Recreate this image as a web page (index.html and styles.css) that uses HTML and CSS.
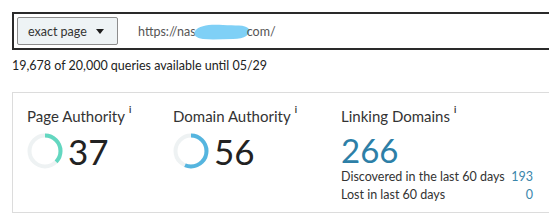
FILE: index.html
```html
<!DOCTYPE html>
<html>
<head>
<meta charset="utf-8">
<link rel="stylesheet" href="styles.css">
</head>
<body>
<div class="page">
  <div class="searchbar">
    <div class="dropdown"><span>exact page</span><span class="caret"></span></div>
    <div class="url"><span>https://nas</span><svg class="scribble" width="58" height="18" viewBox="0 0 58 18"><path d="M2 8 C6 2, 18 1, 30 2 C42 3, 52 1, 56 6 C58 11, 52 16, 40 16 C30 16, 20 17, 10 16 C3 15, 0 12, 2 8 Z" fill="#7fd0f6"/></svg><span>com/</span></div>
  </div>
  <div class="quota">19,678 of 20,000 queries available until 05/29</div>
  <div class="card">
    <div class="metric pa">
      <div class="label">Page Authority<sup class="info">i</sup></div>
      <div class="score">
        <svg class="donut" width="36" height="36" viewBox="0 0 36 36">
          <circle cx="18" cy="18" r="15.5" fill="none" stroke="#eef2f3" stroke-width="4"/>
          <circle cx="18" cy="18" r="15.5" fill="none" stroke="#63d7c0" stroke-width="4" stroke-dasharray="36.03 97.39" transform="rotate(-90 18 18)"/>
        </svg>
        <span class="value">37</span>
      </div>
    </div>
    <div class="metric da">
      <div class="label">Domain Authority<sup class="info">i</sup></div>
      <div class="score">
        <svg class="donut" width="36" height="36" viewBox="0 0 36 36">
          <circle cx="18" cy="18" r="15.5" fill="none" stroke="#eef2f3" stroke-width="4"/>
          <circle cx="18" cy="18" r="15.5" fill="none" stroke="#55b5df" stroke-width="4" stroke-dasharray="54.54 97.39" transform="rotate(-90 18 18)"/>
        </svg>
        <span class="value">56</span>
      </div>
    </div>
    <div class="metric ld">
      <div class="label">Linking Domains<sup class="info">i</sup></div>
      <div class="big">266</div>
      <div class="row"><span>Discovered in the last 60 days</span><span class="num">193</span></div>
      <div class="row"><span>Lost in last 60 days</span><span class="num">0</span></div>
    </div>
  </div>
</div>
</body>
</html>
```
FILE: styles.css
```css
html, body {
  margin: 0;
  padding: 0;
  background: #fff;
  overflow: hidden;
}
body {
  font-family: Lato, "Liberation Sans", sans-serif;
  color: #222;
}
.page {
  padding: 12px 0 0 12px;
  width: 580px;
}
.searchbar {
  display: flex;
  align-items: center;
  gap: 20px;
  height: 34px;
  border: 2px solid #2a2a2a;
  padding: 0 3px;
}
.dropdown {
  display: flex;
  align-items: center;
  justify-content: space-between;
  box-sizing: border-box;
  width: 101px;
  height: 28px;
  padding: 0 13px 0 10px;
  background: #eef3f5;
  border: 1px solid #8d8d8d;
  border-radius: 2px;
  font-size: 12.5px;
  color: #333;
}
.caret {
  width: 0;
  height: 0;
  border-left: 4px solid transparent;
  border-right: 4px solid transparent;
  border-top: 5px solid #1e1e1e;
  margin-top: 1px;
}
.url {
  display: flex;
  align-items: center;
  font-size: 12.5px;
  color: #555;
}
.scribble {
  margin: 1px -4px 0 -3px;
}
.quota {
  margin-top: 8px;
  font-size: 12.5px;
  line-height: 16px;
  color: #222;
}
.card {
  margin-top: 18px;
  border: 1px solid #dcdcdc;
  padding: 14px 0 8px 14px;
  display: grid;
  grid-template-columns: 146px 168px 192px;
}
.label {
  font-size: 15px;
  line-height: 18px;
  color: #333;
  white-space: nowrap;
}
.info {
  font-size: 9px;
  font-weight: 700;
  vertical-align: top;
  line-height: 9px;
  margin-left: 4px;
  position: relative;
  top: -2px;
  color: #333;
}
.score {
  margin-top: 8px;
  display: flex;
  align-items: center;
  gap: 5px;
  height: 36px;
}
.donut {
  display: block;
}
.value {
  font-size: 35px;
  line-height: 36px;
  color: #222;
}
.big {
  margin-top: 7px;
  font-size: 33px;
  line-height: 36px;
  color: #2d7fa7;
}
.row {
  display: flex;
  justify-content: space-between;
  font-size: 12.5px;
  line-height: 18px;
  color: #333;
  white-space: nowrap;
}
.num {
  color: #3a86ab;
}
```
